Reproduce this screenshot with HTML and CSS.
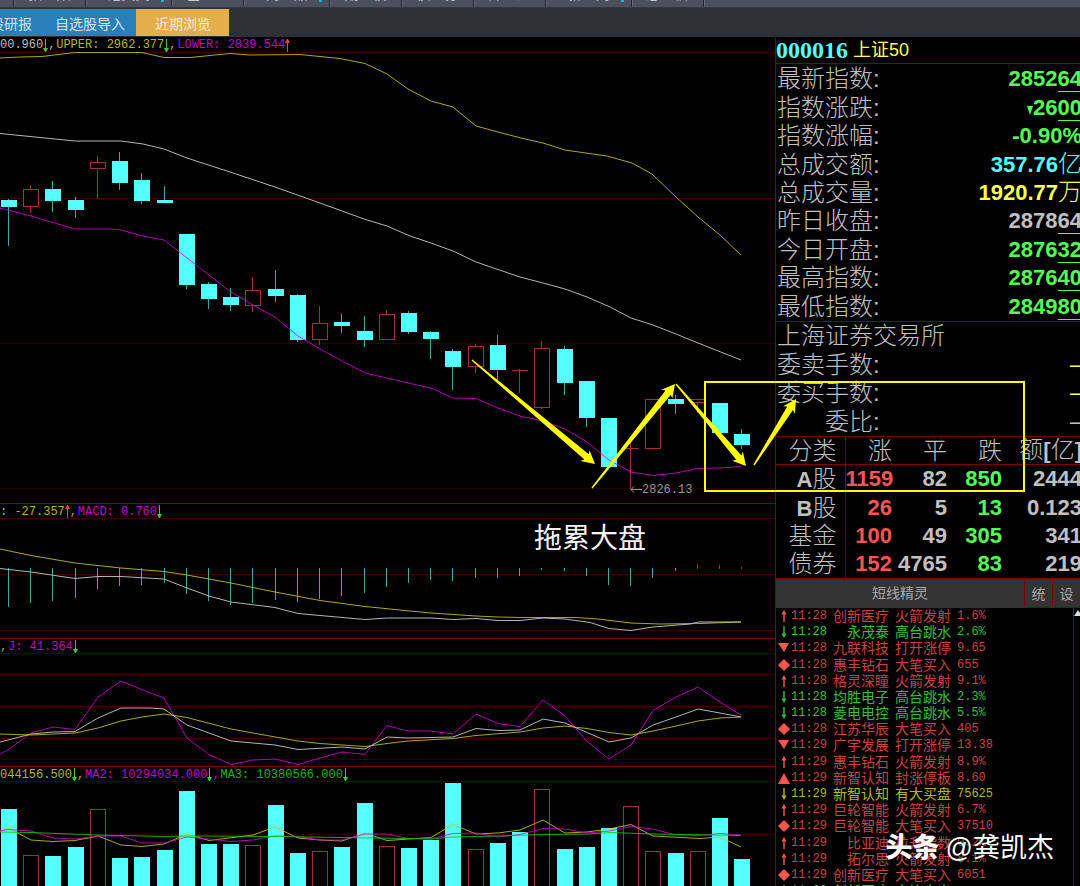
FILE: index.html
```html
<!DOCTYPE html>
<html lang="zh-CN">
<head>
<meta charset="utf-8">
<title>上证50 行情</title>
<link rel="stylesheet" href="styles.css">
</head>
<body>
<svg class="symbols" aria-hidden="true">
  <symbol id="dn" viewBox="0 0 5 13"><path d="M2 0h1v9h2l-2 4h-1l-2-4h2z"/></symbol>
  <symbol id="up" viewBox="0 0 5 13"><path d="M2 13h1V4h2L3 0H2L0 4h2z"/></symbol>
  <symbol id="s-up" viewBox="0 0 12 12"><path d="M6 0L8.5 4.5H6.7V12H5.3V4.5H3.5z"/></symbol>
  <symbol id="s-dn" viewBox="0 0 12 12"><path d="M6 12L3.5 7.5H5.3V0H6.7V7.5H8.5z"/></symbol>
  <symbol id="s-tu" viewBox="0 0 12 12"><path d="M6 1L12 12H0z"/></symbol>
  <symbol id="s-td" viewBox="0 0 12 12"><path d="M0 1H11L6 10z"/></symbol>
  <symbol id="s-di" viewBox="0 0 12 12"><path d="M6 0L12 6L6 12L0 6z"/></symbol>
</svg>

<nav class="menu">
  <a href="#" class="first"></a><a href="#">指　数</a><a href="#" class="wide dot">港美英</a><a href="#">基　金</a><a href="#" class="wide dot">商　品</a><a href="#">期　权</a><a href="#">债　券</a><a href="#">外　汇</a><a href="#" class="wide dot">新　闻</a><a href="#">息　信</a>
</nav>

<div class="tabs">
  <button class="tab cut">个股研报</button>
  <button class="tab">自选股导入</button>
  <button class="tab active">近期浏览</button>
</div>

<main class="workspace">
  <div class="charts">
    <section class="panel">
      <div class="legend"><span class="w">00.960</span><svg class="g"><use href="#dn"/></svg><span class="w sep">,</span><span class="y">UPPER: 2962.377</span><svg class="g"><use href="#dn"/></svg><span class="y sep">,</span><span class="m">LOWER: 2839.544</span><svg class="r"><use href="#up"/></svg></div>
      <svg class="plot" id="price" viewBox="0 52 775 451"></svg>
    </section>
    <section class="panel lined">
      <div class="legend"><span class="y">: -27.357</span><svg class="r"><use href="#up"/></svg><span class="y sep">,</span><span class="m">MACD: 0.760</span><svg class="g"><use href="#dn"/></svg></div>
      <svg class="plot" id="macd" viewBox="0 518 775 120"></svg>
    </section>
    <section class="panel lined">
      <div class="legend"><span class="y sep">,</span><span class="m">J: 41.364</span><svg class="g"><use href="#dn"/></svg></div>
      <svg class="plot" id="kdj" viewBox="0 653 775 113"></svg>
    </section>
    <section class="panel lined">
      <div class="legend"><span class="y">044156.500</span><svg class="g"><use href="#dn"/></svg><span class="y sep">,</span><span class="m">MA2: 10294034.000</span><svg class="g"><use href="#dn"/></svg><span class="m sep">,</span><span class="gr">MA3: 10380566.000</span><svg class="g"><use href="#dn"/></svg></div>
      <svg class="plot" id="volume" viewBox="0 781 775 105"></svg>
    </section>
  </div>

  <aside class="quote">
    <h1><b>000016</b><span>上证50</span></h1>
    <dl class="rows nine">
      <div><dt>最新指数:</dt><dd class="green">2852<u>64</u></dd></div>
      <div><dt>指数涨跌:</dt><dd class="green"><svg class="tick" viewBox="0 0 6 9"><path d="M0 0H6L3 9z"/></svg>26<u>00</u></dd></div>
      <div><dt>指数涨幅:</dt><dd class="green">-0.90%</dd></div>
      <div><dt>总成交额:</dt><dd class="cyan">357.76<i>亿</i></dd></div>
      <div><dt>总成交量:</dt><dd class="yellow">1920.77<i>万</i></dd></div>
      <div><dt>昨日收盘:</dt><dd>2878<u>64</u></dd></div>
      <div><dt>今日开盘:</dt><dd class="green">2876<u>32</u></dd></div>
      <div><dt>最高指数:</dt><dd class="green">2876<u>40</u></dd></div>
      <div><dt>最低指数:</dt><dd class="green">2849<u>80</u></dd></div>
    </dl>
    <dl class="rows four">
      <div><dt>上海证券交易所</dt></div>
      <div><dt>委卖手数:</dt><dd class="yellow none">—</dd></div>
      <div><dt>委买手数:</dt><dd class="yellow none">—</dd></div>
      <div><dt class="indent">委比:</dt><dd class="none">—</dd></div>
    </dl>
    <table class="breadth">
      <thead><tr><th>分类</th><th>涨</th><th>平</th><th>跌</th><th>额<b>[</b>亿<b>]</b></th></tr></thead>
      <tbody>
        <tr><th><b>A</b>股</th><td class="red">1159</td><td>82</td><td class="green">850</td><td>2444</td></tr>
        <tr><th><b>B</b>股</th><td class="red">26</td><td>5</td><td class="green">13</td><td>0.123</td></tr>
        <tr><th>基金</th><td class="red">100</td><td>49</td><td class="green">305</td><td>341</td></tr>
        <tr><th>债券</th><td class="red">152</td><td>4765</td><td class="green">83</td><td>219</td></tr>
      </tbody>
    </table>
    <div class="bar"><h2>短线精灵</h2><button>统</button><button>设</button></div>
    <div class="feed">
      <ul>
        <li><svg><use href="#s-up"/></svg><time>11:28</time><span>创新医疗</span><span>火箭发射</span><em>1.6%</em></li>
        <li class="down"><svg><use href="#s-dn"/></svg><time>11:28</time><span>永茂泰</span><span>高台跳水</span><em>2.6%</em></li>
        <li><svg><use href="#s-td"/></svg><time>11:28</time><span>九联科技</span><span>打开涨停</span><em>9.65</em></li>
        <li><svg><use href="#s-di"/></svg><time>11:28</time><span>惠丰钻石</span><span>大笔买入</span><em>655</em></li>
        <li><svg><use href="#s-up"/></svg><time>11:28</time><span>格灵深瞳</span><span>火箭发射</span><em>9.1%</em></li>
        <li class="down"><svg><use href="#s-dn"/></svg><time>11:28</time><span>均胜电子</span><span>高台跳水</span><em>2.3%</em></li>
        <li class="down"><svg><use href="#s-dn"/></svg><time>11:28</time><span>菱电电控</span><span>高台跳水</span><em>5.5%</em></li>
        <li><svg><use href="#s-di"/></svg><time>11:28</time><span>江苏华辰</span><span>大笔买入</span><em>405</em></li>
        <li><svg><use href="#s-td"/></svg><time>11:29</time><span>广宇发展</span><span>打开涨停</span><em>13.38</em></li>
        <li><svg><use href="#s-up"/></svg><time>11:29</time><span>惠丰钻石</span><span>火箭发射</span><em>8.9%</em></li>
        <li><svg><use href="#s-tu"/></svg><time>11:29</time><span>新智认知</span><span>封涨停板</span><em>8.60</em></li>
        <li class="big"><svg><use href="#s-dn"/></svg><time>11:29</time><span>新智认知</span><span>有大买盘</span><em>75625</em></li>
        <li><svg><use href="#s-up"/></svg><time>11:29</time><span>巨轮智能</span><span>火箭发射</span><em>6.7%</em></li>
        <li><svg><use href="#s-di"/></svg><time>11:29</time><span>巨轮智能</span><span>大笔买入</span><em>37510</em></li>
        <li><svg><use href="#s-up"/></svg><time>11:29</time><span>比亚迪</span><span>拉升指数</span><em>0.2%</em></li>
        <li><svg><use href="#s-up"/></svg><time>11:29</time><span>拓尔思</span><span>火箭发射</span><em>8.1%</em></li>
        <li><svg><use href="#s-di"/></svg><time>11:29</time><span>创新医疗</span><span>大笔买入</span><em>6051</em></li>
        <li class="down"><svg><use href="#s-dn"/></svg><time>11:29</time><span>创新医疗</span><span>大笔卖出</span><em></em></li>
      </ul>
      <div class="scroll"><svg viewBox="0 0 8 6"><path d="M4 0L8 6H0z"/></svg></div>
    </div>
  </aside>

  <svg class="notes" id="notes" viewBox="0 37 1080 849" preserveAspectRatio="xMinYMin meet"></svg>
  <p class="caption">拖累大盘</p>
  <p class="credit"><b>头条</b><span>@龚凯杰</span></p>
</main>
<script src="charts.js"></script>
</body>
</html>
```
FILE: styles.css
```css
* { box-sizing: border-box; margin: 0; padding: 0; }

body {
  display: flex;
  flex-direction: column;
  height: 100vh;
  overflow: hidden;
  background: #000;
  color: #c0c0c0;
  font-family: "Liberation Sans", "Noto Sans CJK SC", sans-serif;
}

button { border: 0; background: none; font: inherit; color: inherit; }
a { color: inherit; text-decoration: none; }
.symbols { display: none; }

/* menu strip */
.menu {
  display: flex;
  flex: none;
  align-items: flex-end;
  height: 8px;
  overflow: hidden;
  background: #4c505d;
  border-bottom: 1px solid #33363c;
}
.menu a {
  position: relative;
  flex: none;
  width: 72px;
  height: 20px;
  border-right: 1px solid #22252a;
  box-shadow: 1px 0 #656975;
  color: #c8cad0;
  font-size: 14px;
  line-height: 14px;
  text-align: center;
}
.menu .first { width: 14px; }
.menu .wide { width: 86px; }
.menu .dot::after {
  content: "";
  position: absolute;
  right: 7px;
  bottom: 5px;
  width: 3px;
  height: 3px;
  background: #1ab0f0;
}

/* tabs */
.tabs {
  display: flex;
  flex: none;
  height: 29px;
  padding: 1px 0;
  background: #2d3035;
}
.tab {
  flex: none;
  padding: 0 11px 0 12px;
  background: #2980b9;
  color: #d4e2ec;
  font-size: 14px;
  white-space: nowrap;
}
.tab.cut {
  display: flex;
  justify-content: flex-end;
  align-items: center;
  width: 43px;
  overflow: hidden;
}
.tab.active { padding: 0 18px 0 19px; background: #e3ae4b; color: #f8ecd4; }

/* workspace */
.workspace { position: relative; display: flex; flex: 1; min-height: 0; }
.charts { flex: 1; min-width: 0; overflow: hidden; }
.legend {
  display: flex;
  align-items: center;
  height: 15px;
  padding-top: 1px;
  font-family: "Liberation Mono", monospace;
  font-size: 12px;
  line-height: 14px;
  white-space: pre;
}
.lined .legend { border-top: 1px solid #7c0000; }
.legend svg { flex: none; width: 5px; height: 13px; }
.legend .sep { width: 8px; }
.plot { display: block; width: 100%; height: auto; }
.w { color: #bcbcbc; }
.y { color: #b8b800; }
.m { color: #c000c0; }
.gr { color: #00b800; }
.g { fill: #3cc83c; }
.r { fill: #e04848; }

.grid { stroke: #300000; }
.line { fill: none; stroke-width: 1; }
.line.yellow { stroke: #c8c800; stroke-opacity: .85; }
.line.white { stroke: #c8c8c8; stroke-opacity: .9; }
.line.magenta { stroke: #d800d8; stroke-opacity: .8; }
.line.green { stroke: #00d000; stroke-opacity: .85; }
.fall { fill: #54ffff; stroke: none; }
.fall-wick { stroke: #38a8a8; }
.rise { fill: #000; stroke: #a03434; }
.rise-wick { stroke: #a03434; }
.low-tag { fill: #989898; font: 12px "Liberation Mono", monospace; }
.low-arrow { fill: none; stroke: #989898; }

/* quote panel */
.quote {
  display: flex;
  flex-direction: column;
  flex: none;
  width: 305px;
  overflow: hidden;
  border-left: 1px solid #7c0000;
}
.quote h1 {
  display: flex;
  flex: none;
  align-items: center;
  gap: 5px;
  height: 27px;
  border-bottom: 1px solid #7c0000;
  color: #ffff54;
  font-size: 18px;
  font-weight: 400;
  line-height: 26px;
}
.quote h1 b { color: #54ffff; font-family: "Liberation Serif", serif; font-size: 24px; }
.rows {
  display: grid;
  flex: none;
  grid-auto-rows: 1fr;
  border-bottom: 1px solid #7c0000;
}
.nine { height: 258px; padding-top: 1px; }
.four { height: 115px; }
.rows div {
  display: flex;
  align-items: center;
  justify-content: space-between;
  min-height: 0;
  padding-left: 1px;
  line-height: 28px;
}
.rows dt { font-size: 24px; font-weight: 300; white-space: nowrap; }
.rows .indent { padding-left: 48px; }
.rows dd { margin-right: -2px; font-size: 22px; font-weight: 700; white-space: nowrap; }
.rows .none { margin-right: -12px; font-weight: 400; }
.rows i { font-size: 24px; font-style: normal; font-weight: 300; line-height: 24px; }
.rows u {
  display: inline-block;
  border-bottom: 1px solid;
  line-height: 24px;
  text-decoration: none;
}
.tick { width: 6px; height: 9px; fill: currentColor; }
.green { color: #54ff54; }
.red { color: #ff5454; }
.cyan { color: #54ffff; }
.yellow { color: #ffff54; }

.breadth {
  flex: none;
  width: 306px;
  height: 141px;
  table-layout: fixed;
  border-collapse: collapse;
}
.breadth th, .breadth td { text-align: right; line-height: 26px; white-space: nowrap; }
.breadth th { font-size: 24px; font-weight: 300; }
.breadth td { font-size: 22px; font-weight: 700; }
.breadth th b { font-size: 22px; font-weight: 700; }
.breadth thead th { border-bottom: 1px solid #7c0000; }
.breadth th:first-child { width: 69px; padding-right: 8px; border-right: 1px solid #7c0000; }
.breadth th:nth-child(2) { width: 47px; }
.breadth th:nth-child(3), .breadth th:nth-child(4) { width: 55px; }

.bar {
  display: flex;
  flex: none;
  height: 30px;
  border-top: 1px solid #7c0000;
  background: #333;
  color: #a8a8a8;
  font-size: 14px;
}
.bar h2 { flex: 1; font-size: 14px; font-weight: 400; line-height: 28px; text-align: center; }
.bar button { width: 28px; border: 1px solid #7c0000; border-width: 0 0 1px 1px; }

.feed { display: flex; flex: 1; min-height: 0; }
.feed ul {
  display: grid;
  flex: 1;
  grid-template-rows: repeat(17, 1fr) 3px;
  overflow: hidden;
  list-style: none;
}
.feed li {
  display: grid;
  grid-template-columns: 12px 37px 56px 56px 1fr;
  column-gap: 6px;
  align-items: center;
  min-height: 0;
  overflow: hidden;
  padding-left: 2px;
  color: #c84444;
  font-size: 14px;
  line-height: 16px;
  white-space: nowrap;
}
.feed li svg { width: 12px; height: 12px; fill: #ff5454; }
.feed time { margin-left: -5px; }
.feed time, .feed em { font: 12px/16px "Liberation Mono", monospace; }
.feed span, .feed em { margin-left: -6px; }
.feed span { text-align: right; padding-right: 6px; }
.feed .down, .feed .down svg { color: #34c034; fill: #34c034; }
.feed .big, .feed .big svg { color: #b8b800; fill: #b8b800; }
.scroll { flex: none; width: 7px; padding-top: 2px; border-left: 1px solid #7c0000; overflow: hidden; }
.scroll svg { display: block; width: 8px; height: 6px; fill: #e0e0e0; }

/* overlays on the charts */
.notes { position: absolute; inset: 0; width: 100%; height: 100%; pointer-events: none; }
.frame { fill: none; stroke: #ffff00; stroke-width: 2; }
.pointer { fill: #ffff00; }
.caption {
  position: absolute;
  left: 534px;
  top: 482px;
  color: #f4f4f4;
  font-size: 28px;
  line-height: 40px;
}
.credit {
  position: absolute;
  right: 26px;
  bottom: 18px;
  display: flex;
  gap: 6px;
  color: #fff;
  font-size: 27px;
  line-height: 40px;
}
.credit b { font-weight: 900; }
```
FILE: charts.js
```js
const NS = 'http://www.w3.org/2000/svg';
const STEP = 22.22, START = 8.5, BODY = 16;

function add(svg, tag, attrs, text) {
  const el = document.createElementNS(NS, tag);
  for (const k in attrs) el.setAttribute(k, attrs[k]);
  if (text) el.textContent = text;
  svg.appendChild(el);
  return el;
}
const byId = id => document.getElementById(id);
const mid = i => Math.floor(START + STEP * i) + 0.5;
const grid = (svg, ys) => ys.forEach(y => add(svg, 'path', { class: 'grid', d: `M0 ${y}H775` }));
const line = (svg, cls, points) => add(svg, 'polyline', { class: 'line ' + cls, points });
const wick = (svg, cls, x, a, b) => add(svg, 'path', { class: cls, d: `M${x} ${a}V${b}` });

function box(svg, up, x, top, bottom) {
  if (up) add(svg, 'rect', { class: 'rise', x: x - 8 + 1, y: top + 0.5, width: BODY - 1, height: Math.max(bottom - top - 1, 0.1) });
  else add(svg, 'rect', { class: 'fall', x: x - 7.5, y: top, width: BODY, height: bottom - top });
}

// price: [rising, body top, body bottom, high, low]
const price = byId('price');
grid(price, [52.5, 198.5, 343.5, 488.5]);
[
  [0,200,207,199,246],[1,189,207,185,213],[0,189,201,181,212],[0,200,210,197,218],[1,162,169,156,199],
  [0,161,183,152,190],[0,180,201,173,204],[0,200,203,186,203],[0,234,285,234,289],[0,284,299,282,309],
  [0,297,305,288,311],[1,290,306,277,312],[0,289,296,270,302],[0,295,340,294,342],[1,323,340,306,345],
  [0,322,326,314,333],[0,331,340,316,347],[1,314,340,310,340],[0,313,332,311,334],[0,332,339,331,359],
  [0,351,367,349,390],[1,346,367,344,373],[0,345,370,335,381],[1,370,371,369,393],[1,348,408,341,409],
  [0,349,383,346,395],[0,381,418,381,427],[0,418,467,418,467],[1,448,449,441,489],[1,399,449,399,449],
  [0,399,404,395,414],[1,399,403,399,413],[0,403,433,403,433],[0,434,445,429,449]
].forEach(([up, top, bottom, high, low], i) => {
  const x = mid(i);
  wick(price, up ? 'rise-wick' : 'fall-wick', x, high, low);
  box(price, up, x, top, bottom);
});
line(price, 'yellow', '0,58 20,57 42,56.5 75,52.5 142,52.5 164,57.5 190,57.5 230,53.5 250,55 300,54.5 340,58.5 365,63.5 387,74 408,89 431,101 453,107 476,126 498,132 521,138 543,143 565,150 607,156 632,163 652,174 676,197 698,217 720,235 741,255');
line(price, 'white', '0,133.5 75,141 121,141 143,144 164,149 187,158 230,172 275,187 320,203 364,219 387,226 410,236 431,243 453,251 476,262 520,277 543,283 565,289 587,297 610,307 631,318 653,325 676,334 698,343 741,360');
line(price, 'magenta', '0,208 31,216 75,229 110,229 121,230 143,236 164,240 187,258 209,275 231,292 253,305 275,317 298,336 320,349 342,361 365,373 387,378 408,383 431,388 453,398 476,398.5 498,408 520,416 543,421 565,429 587,442 609,460 631,472 653,475.5 676,473 698,468.5 720,468 741,466.5');
add(price, 'path', { class: 'low-arrow', d: 'M642 489.5H631M634 486.5L631 489.5L634 492.5' });
add(price, 'text', { class: 'low-tag', x: 642, y: 493 }, '2826.13');

// MACD histogram: end of each bar, measured from the zero line
const macd = byId('macd');
grid(macd, [518.5, 574.5, 630.5]);
[607,603,601,598,589,586,585,583,594,601,605,603,600,602,599,596,593,587,583,580,581,578,578,576,570,571,576,585,586,578,571]
  .forEach((y, i) => wick(macd, 'fall-wick', mid(i), 568, y));
[[564,569],[565,569],[567,569]].forEach(([a, b], i) => wick(macd, 'rise-wick', mid(31 + i), a, b));
line(macd, 'yellow', '0,549 31,555.5 75,563 121,568 164,571.5 187,575 231,583 275,592 320,600.5 365,606.5 400,610 431,613 476,616 498,617 520,617.5 576,617.5 598,619 631,623 660,624 700,623.5 741,622');
line(macd, 'white', '0,568.5 31,572 75,578.5 98,576.5 121,576.5 164,579 187,588 209,596 231,602 275,607.5 298,613.5 320,615.5 365,619.5 387,618 431,618 453,619.5 476,618.5 498,620.5 520,620.5 543,618 565,619 590,622.5 609,628.5 631,630.5 653,627 690,624 698,622 741,622');

const kdj = byId('kdj');
grid(kdj, [653.5, 674.5, 706.5, 738.5, 759.5]);
line(kdj, 'magenta', '0,754 8,750 31,733 53,727 75,729.5 98,697 121,681 143,690 164,698 187,738 209,754.5 231,764.5 253,760 275,759 298,764.5 320,758 342,752 365,754.5 387,725.5 408,731 431,731 453,734 476,714 498,723.5 520,726.5 543,700 565,716 587,741.5 609,759 631,745 653,710.5 676,697 698,687 720,702 741,715');
line(kdj, 'white', '0,742 8,740 31,734 53,732 75,731.5 98,718 121,708 150,708 164,709 187,725 209,733 231,741 275,745 298,749.5 342,747 365,749 387,737 408,738 453,737 476,728.5 498,730.5 520,730 543,719 565,723 587,732.5 609,742 631,738 653,725 676,717 698,709 720,713 741,717');
line(kdj, 'yellow', '0,734 31,735 75,733 98,728 121,721 142,717 164,714 187,717.5 231,729 253,733 298,741 320,743.5 365,746.5 387,743.5 408,741 453,738.5 476,735.5 520,732 543,728 565,726 587,728.5 609,732.5 631,735 653,731 676,726 698,721 720,718 741,717');

// volume: [rising, top of bar]
const volume = byId('volume');
grid(volume, [781.5, 834.5]);
[
  [0,809],[1,855],[0,856],[0,847],[1,809],[0,858],[0,857],[0,850],[0,791],[0,844],[0,844],[1,845],
  [0,805],[0,853],[1,851],[0,847],[0,803],[1,846],[0,848],[0,840],[0,783],[1,849],[0,843],[0,832],
  [1,789],[0,849],[0,847],[0,828],[1,806],[1,851],[0,853],[1,851],[0,818],[0,859]
].forEach(([up, top], i) => box(volume, up, mid(i), top, 890));
line(volume, 'yellow', '0,831 8,828 31,840 53,841.5 75,840.5 98,836 121,845 142,846.5 164,844 187,834 209,840.5 253,835 275,827 298,838 320,840 342,841 365,833 387,840.5 431,837.5 453,824.5 476,834 498,833 520,830 543,820 565,833 587,832 609,829 631,824.5 653,836 700,838.5 720,837 741,847');
line(volume, 'magenta', '0,831 8,829.5 31,831 53,838 75,839 98,836 121,836 142,843 164,843 187,837 209,839 231,841.5 253,840 275,836 298,836.5 320,840 342,840 365,834 387,834 408,838.5 431,839 453,833.5 476,833 498,837 520,834.5 543,828.5 565,829 587,833 609,831 631,826.5 653,829 676,835 698,835.5 720,833.5 741,835');
line(volume, 'green', '0,832 31,832.5 98,835 164,836.5 187,836 275,836.5 342,837.5 408,838.5 431,839 453,837 498,836 543,834.5 587,834 612,832.5 653,834 741,835.5');

// hand-drawn notes: tapered arrows and a highlight frame
const notes = byId('notes');
function arrow(x1, y1, x2, y2) {
  const len = Math.hypot(x2 - x1, y2 - y1), ux = (x2 - x1) / len, uy = (y2 - y1) / len;
  const at = (d, side) => `${x1 + ux * d - uy * side},${y1 + uy * d + ux * side}`;
  add(notes, 'polygon', {
    class: 'pointer',
    points: [at(0, -0.7), at(len - 11, -3.4), at(len - 13, -7), at(len, 0), at(len - 13, 7), at(len - 11, 3.4), at(0, 0.7)].join(' ')
  });
}
arrow(472, 360, 595, 464);
arrow(592, 488, 675, 384);
arrow(676, 384, 746, 466);
arrow(754, 465, 796, 399);
add(notes, 'rect', { class: 'frame', x: 705, y: 382, width: 319, height: 109 });
```
